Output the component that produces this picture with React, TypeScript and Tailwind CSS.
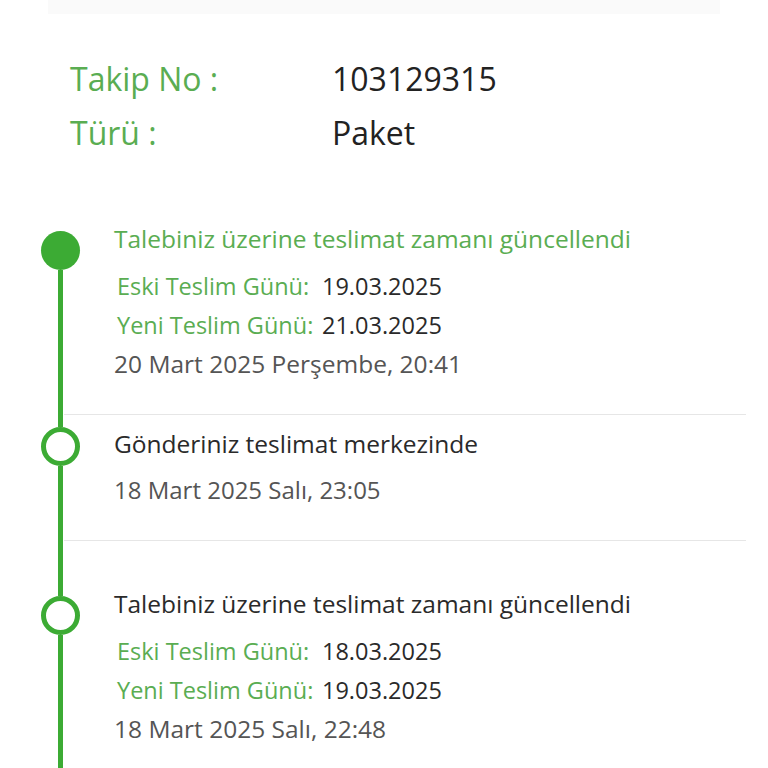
import React from 'react'

type Row = { label: string; value: string }

type Step = {
  title: string
  active?: boolean
  rows?: Row[]
  date: string
  padTop: number
  dotTop: number
}

const steps: Step[] = [
  {
    title: 'Talebiniz üzerine teslimat zamanı güncellendi',
    active: true,
    rows: [
      { label: 'Eski Teslim Günü:', value: '19.03.2025' },
      { label: 'Yeni Teslim Günü:', value: '21.03.2025' },
    ],
    date: '20 Mart 2025 Perşembe, 20:41',
    padTop: 24,
    dotTop: 31,
  },
  {
    title: 'Gönderiniz teslimat merkezinde',
    date: '18 Mart 2025 Salı, 23:05',
    padTop: 14,
    dotTop: 12,
  },
  {
    title: 'Talebiniz üzerine teslimat zamanı güncellendi',
    rows: [
      { label: 'Eski Teslim Günü:', value: '18.03.2025' },
      { label: 'Yeni Teslim Günü:', value: '19.03.2025' },
    ],
    date: '18 Mart 2025 Salı, 22:48',
    padTop: 48,
    dotTop: 55,
  },
]

function TimelineItem({ step, first }: { step: Step; first: boolean }) {
  return (
    <div className="flex">
      {/* line + dot */}
      <div className="flex w-[80px] shrink-0 flex-col items-center pl-[40px]">
        <div
          className={first ? 'w-[5px]' : 'w-[5px] bg-[#3cab34]'}
          style={{ height: step.dotTop }}
        />
        {step.active ? (
          <div className="h-[39px] w-[39px] rounded-full bg-[#3cab34]" />
        ) : (
          <div className="h-[39px] w-[39px] rounded-full border-[5px] border-[#3cab34] bg-white" />
        )}
        <div className="w-[5px] flex-1 bg-[#3cab34]" />
      </div>

      {/* content */}
      <div
        className="-ml-4 flex-1 border-b border-[#e6e6e6] pb-[31px] pl-[50px]"
        style={{ paddingTop: step.padTop }}
      >
        <div
          className={
            step.active
              ? 'text-[24.5px] leading-[30px] text-[#5aad52]'
              : 'text-[24.5px] leading-[30px] text-[#2a2a2a]'
          }
        >
          {step.title}
        </div>
        {step.rows ? (
          <div className="mt-[13px]">
            {step.rows.map((r) => (
              <div key={r.label} className="flex pl-[3px] text-[23.5px] leading-[39px]">
                <span className="w-[205px] text-[#5aad52]">{r.label}</span>
                <span className="text-[#2a2a2a]">{r.value}</span>
              </div>
            ))}
          </div>
        ) : null}
        <div
          className={
            step.rows
              ? 'text-[24.5px] leading-[38px] text-[#555555]'
              : 'mt-[12px] text-[24px] leading-[38px] text-[#555555]'
          }
        >
          {step.date}
        </div>
      </div>
    </div>
  )
}

export default function App() {
  return (
    <div
      className="h-[768px] w-[768px] overflow-hidden bg-white"
      style={{ fontFamily: '"Open Sans", "DejaVu Sans", sans-serif' }}
    >
      <div className="mx-[48px] h-[14px] bg-[#fafafa]" />

      <div className="px-[70px] pt-[38px]">
        <div className="flex text-[32px] leading-[54px]">
          <span className="w-[262px] text-[#5aad52]">Takip No :</span>
          <span className="text-[#222222]">103129315</span>
        </div>
        <div className="flex text-[32px] leading-[54px]">
          <span className="w-[262px] text-[#5aad52]">Türü :</span>
          <span className="text-[#222222]">Paket</span>
        </div>
      </div>

      <div className="mt-[40px] pr-[22px]">
        {steps.map((s, i) => (
          <TimelineItem key={i} step={s} first={i === 0} />
        ))}
      </div>
    </div>
  )
}
